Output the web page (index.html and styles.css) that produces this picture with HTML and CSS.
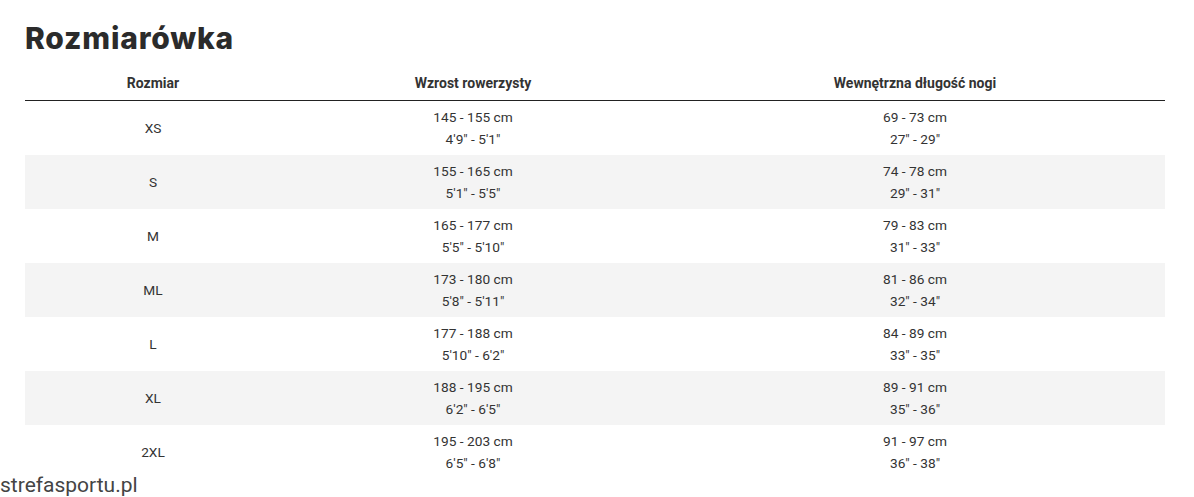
FILE: index.html
```html
<!DOCTYPE html>
<html lang="pl">
<head>
<meta charset="utf-8">
<title>Rozmiarówka</title>
<link rel="stylesheet" href="styles.css">
</head>
<body>
<main class="page">
  <h1 class="title">Rozmiarówka</h1>
  <table class="sizes">
    <thead>
      <tr>
        <th class="c1">Rozmiar</th>
        <th class="c2">Wzrost rowerzysty</th>
        <th class="c3">Wewnętrzna długość nogi</th>
      </tr>
    </thead>
    <tbody>
      <tr><td>XS</td><td>145 - 155 cm<br>4'9" - 5'1"</td><td>69 - 73 cm<br>27" - 29"</td></tr>
      <tr><td>S</td><td>155 - 165 cm<br>5'1" - 5'5"</td><td>74 - 78 cm<br>29" - 31"</td></tr>
      <tr><td>M</td><td>165 - 177 cm<br>5'5" - 5'10"</td><td>79 - 83 cm<br>31" - 33"</td></tr>
      <tr><td>ML</td><td>173 - 180 cm<br>5'8" - 5'11"</td><td>81 - 86 cm<br>32" - 34"</td></tr>
      <tr><td>L</td><td>177 - 188 cm<br>5'10" - 6'2"</td><td>84 - 89 cm<br>33" - 35"</td></tr>
      <tr><td>XL</td><td>188 - 195 cm<br>6'2" - 6'5"</td><td>89 - 91 cm<br>35" - 36"</td></tr>
      <tr><td>2XL</td><td>195 - 203 cm<br>6'5" - 6'8"</td><td>91 - 97 cm<br>36" - 38"</td></tr>
    </tbody>
  </table>
</main>
<div class="watermark">strefasportu.pl</div>
</body>
</html>
```

FILE: styles.css
```css
html, body {
  margin: 0;
  padding: 0;
  background: #fff;
}
body {
  font-family: Roboto, "Liberation Sans", sans-serif;
  color: #333;
  position: relative;
  height: 497px;
  overflow: hidden;
}
.page {
  padding: 0 29px 0 25px;
}
.title {
  margin: 0;
  padding-top: 20px;
  height: 50px;
  box-sizing: border-box;
  font-family: Inter, "Liberation Sans", sans-serif;
  font-weight: 800;
  font-size: 30px;
  line-height: 36px;
  letter-spacing: 0.8px;
  color: #2b2b2b;
}
.sizes {
  width: 1140px;
  border-collapse: collapse;
  table-layout: fixed;
  font-size: 13.7px;
}
.sizes th {
  height: 50px;
  padding: 16px 0 0;
  box-sizing: border-box;
  font-weight: 700;
  font-size: 14px;
  color: #333;
  text-align: center;
  vertical-align: middle;
  border-bottom: 1px solid #222;
}
.c1 { width: 256px; }
.c2 { width: 384px; }
.c3 { width: 500px; }
.sizes td {
  height: 54px;
  padding: 5px 0;
  box-sizing: border-box;
  text-align: center;
  vertical-align: middle;
  line-height: 22px;
  color: #333;
}
.sizes tbody tr:nth-child(even) td {
  background: #f4f4f4;
}
.watermark {
  position: absolute;
  left: 0;
  bottom: 0;
  font-family: Roboto, "Liberation Sans", sans-serif;
  font-size: 21px;
  line-height: 23px;
  color: #444;
  background: rgba(255,255,255,0.6);
}
```
